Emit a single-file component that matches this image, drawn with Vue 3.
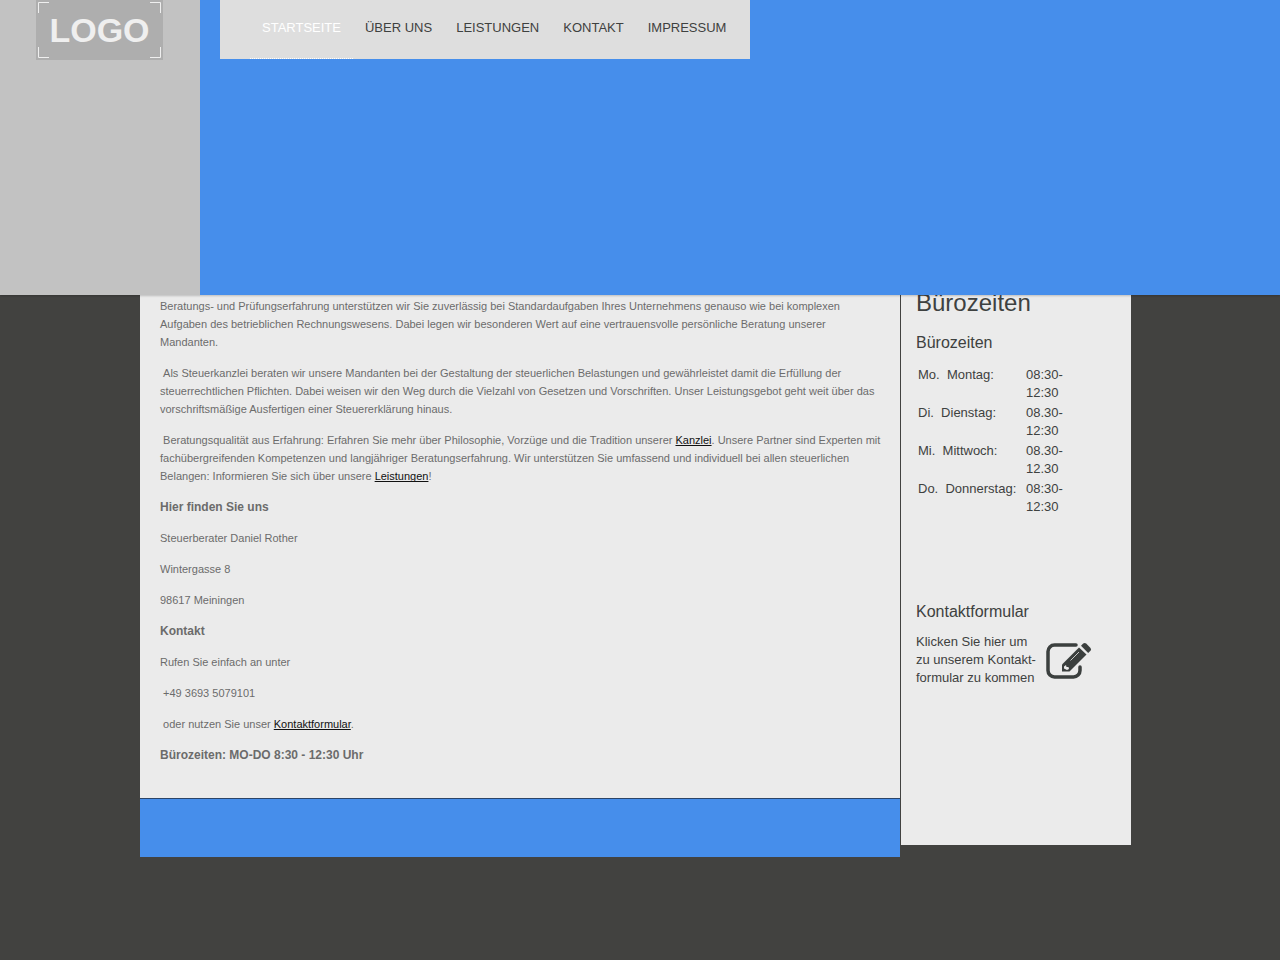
<script setup>
const nav = [
  { label: 'STARTSEITE', active: true },
  { label: 'ÜBER UNS' },
  { label: 'LEISTUNGEN' },
  { label: 'KONTAKT' },
  { label: 'IMPRESSUM' },
]
const hours = [
  ['Mo.\u00a0 Montag:', '08:30-', '12:30'],
  ['Di.\u00a0 Dienstag:', '08.30-', '12:30'],
  ['Mi.\u00a0 Mittwoch:', '08.30-', '12.30'],
  ['Do.\u00a0 Donnerstag:', '08:30-', '12:30'],
]
</script>

<template>
  <div class="page">
    <header class="header">
      <div class="brand">
        <a class="logo" href="#" aria-label="Logo">
          <svg class="corners" viewBox="0 0 127 60" fill="none" stroke="#efefef" aria-hidden="true">
            <path d="M2.5 13V2.5H13M114 2.5H124.5V13M2.5 47V57.5H13M114 57.5H124.5V47" />
          </svg>
          <span>LOGO</span>
        </a>
      </div>
      <nav class="nav">
        <a v-for="item in nav" :key="item.label" href="#" :class="{ active: item.active }">{{ item.label }}</a>
      </nav>
    </header>

    <div class="columns">
      <div class="left">
        <main class="content">
          <p>Beratungs- und Prüfungserfahrung unterstützen wir Sie zuverlässig bei Standardaufgaben Ihres Unternehmens genauso wie bei komplexen Aufgaben des betrieblichen Rechnungswesens. Dabei legen wir besonderen Wert auf eine vertrauensvolle persönliche Beratung unserer Mandanten.</p>
          <p>&nbsp;Als Steuerkanzlei beraten wir unsere Mandanten bei der Gestaltung der steuerlichen Belastungen und gewährleistet damit die Erfüllung der steuerrechtlichen Pflichten. Dabei weisen wir den Weg durch die Vielzahl von Gesetzen und Vorschriften. Unser Leistungsgebot geht weit über das vorschriftsmäßige Ausfertigen einer Steuererklärung hinaus.</p>
          <p>&nbsp;Beratungsqualität aus Erfahrung: Erfahren Sie mehr über Philosophie, Vorzüge und die Tradition unserer <a href="#">Kanzlei</a>. Unsere Partner sind Experten mit fachübergreifenden Kompetenzen und langjähriger Beratungserfahrung. Wir unterstützen Sie umfassend und individuell bei allen steuerlichen Belangen: Informieren Sie sich über unsere <a href="#">Leistungen</a>!</p>
          <h2>Hier finden Sie uns</h2>
          <p>Steuerberater Daniel Rother</p>
          <p>Wintergasse 8</p>
          <p>98617 Meiningen</p>
          <h2>Kontakt</h2>
          <p>Rufen Sie einfach an unter</p>
          <p>&nbsp;+49 3693 5079101</p>
          <p>&nbsp;oder nutzen Sie unser <a href="#">Kontaktformular</a>.</p>
          <h2>Bürozeiten: MO-DO 8:30 - 12:30 Uhr</h2>
        </main>
        <footer class="footer"></footer>
      </div>

      <aside class="sidebar">
        <h2>Bürozeiten</h2>
        <h3>Bürozeiten</h3>
        <table>
          <tbody>
            <tr v-for="row in hours" :key="row[0]">
              <th scope="row">{{ row[0] }}</th>
              <td>{{ row[1] }}<br>{{ row[2] }}</td>
            </tr>
          </tbody>
        </table>
        <h3 class="form-title">Kontaktformular</h3>
        <a class="form-link" href="#">
          <span>Klicken Sie hier um<br>zu unserem Kontakt-<br>formular zu kommen</span>
          <svg viewBox="0 0 46 38" aria-hidden="true">
            <path d="M30 4H8.500A6.500 6.500 0 0 0 2 10.500V29.500A6.500 6.500 0 0 0 8.500 36H27.500A6.500 6.500 0 0 0 34 29.500V26" fill="none" stroke="#3b3f3e" stroke-width="3.500" stroke-linecap="round" />
            <path d="M16 30.500V23.500L33 6.500L40.500 13.500L23.500 30.500Z" fill="#3b3f3e" />
            <path d="M35 4.700L37.200 2.600Q38.700 1.300 40.200 2.600L44.500 6.900Q45.700 8.300 44.500 9.700L42.200 12Z" fill="#3b3f3e" />
            <path d="M18 25.500L20 24L20.500 26H22.500L23 28L21 29L18 27.500Z" fill="#ebebeb" />
            <path d="M24.500 19.500L33 11" stroke="#ebebeb" stroke-width=".8" />
          </svg>
        </a>
      </aside>
    </div>
  </div>
</template>

<style>
body {
  background: #424240;
}
</style>

<style scoped>
.page {
  min-height: 100vh;
  font-family: "Liberation Sans", Arial, Helvetica, sans-serif;
  color: #3e4140;
}
a {
  color: inherit;
  text-decoration: none;
}
h2,
h3,
p {
  margin: 0;
}
.header {
  position: sticky;
  top: 0;
  z-index: 1;
  display: flex;
  align-items: flex-start;
  height: 295px;
  background: #468eeb;
  box-shadow: 0 1px 2px rgba(0, 0, 0, 0.2);
}
.brand {
  flex: none;
  box-sizing: border-box;
  width: 200px;
  height: 100%;
  padding-left: 36px;
  background: #c2c2c2;
}
.logo {
  position: relative;
  display: block;
  width: 127px;
  background: #aeaeae;
  color: #efefef;
  font-size: 34px;
  font-weight: bold;
  line-height: 60px;
  text-align: center;
}
.corners {
  position: absolute;
  inset: 0;
}
.nav {
  display: flex;
  margin-left: 20px;
  padding: 0 12px 0 30px;
  background: #dedede;
  font-size: 13px;
  line-height: 56px;
}
.nav a {
  padding: 0 12px 2px;
  border-bottom: 1px dotted transparent;
}
.nav a.active {
  color: #fff;
  border-bottom-color: #fff;
}
.columns {
  display: flex;
  align-items: flex-start;
  gap: 1px;
  max-width: 1000px;
  margin: -10px auto 0;
  padding-right: 9px;
  box-sizing: border-box;
}
.left {
  flex: 1;
}
.content {
  display: flex;
  flex-direction: column;
  gap: 13px;
  padding: 12px 16px 34px 20px;
  border-bottom: 1px solid #2c4568;
  background: #ebebeb;
  color: #6b6b6b;
  font-size: 11px;
  line-height: 18px;
}
.content h2 {
  font-size: 12px;
}
.content a {
  color: #111;
  text-decoration: underline 1px;
  text-decoration-skip-ink: none;
  text-underline-offset: 1px;
}
.footer {
  height: 58px;
  background: #468eeb;
}
.sidebar {
  flex: none;
  box-sizing: border-box;
  width: 230px;
  min-height: 560px;
  padding: 4px 15px;
  background: #ebebeb;
  box-shadow: -1px 0 #424240;
  font-size: 13px;
  line-height: 18px;
}
.sidebar h2 {
  margin-bottom: 17px;
  font-size: 24px;
  font-weight: normal;
  line-height: 28px;
}
.sidebar h3 {
  margin-bottom: 12px;
  font-size: 16px;
  font-weight: normal;
}
table {
  border-spacing: 2px;
}
th,
td {
  padding: 0;
  font-weight: normal;
  text-align: left;
  vertical-align: top;
}
th {
  width: 106px;
  white-space: nowrap;
}
.sidebar .form-title {
  margin-top: 85px;
}
.form-link {
  display: flex;
  align-items: center;
  gap: 10px;
}
.form-link span {
  width: 120px;
  white-space: nowrap;
}
.form-link svg {
  width: 46px;
  height: 38px;
}
</style>
